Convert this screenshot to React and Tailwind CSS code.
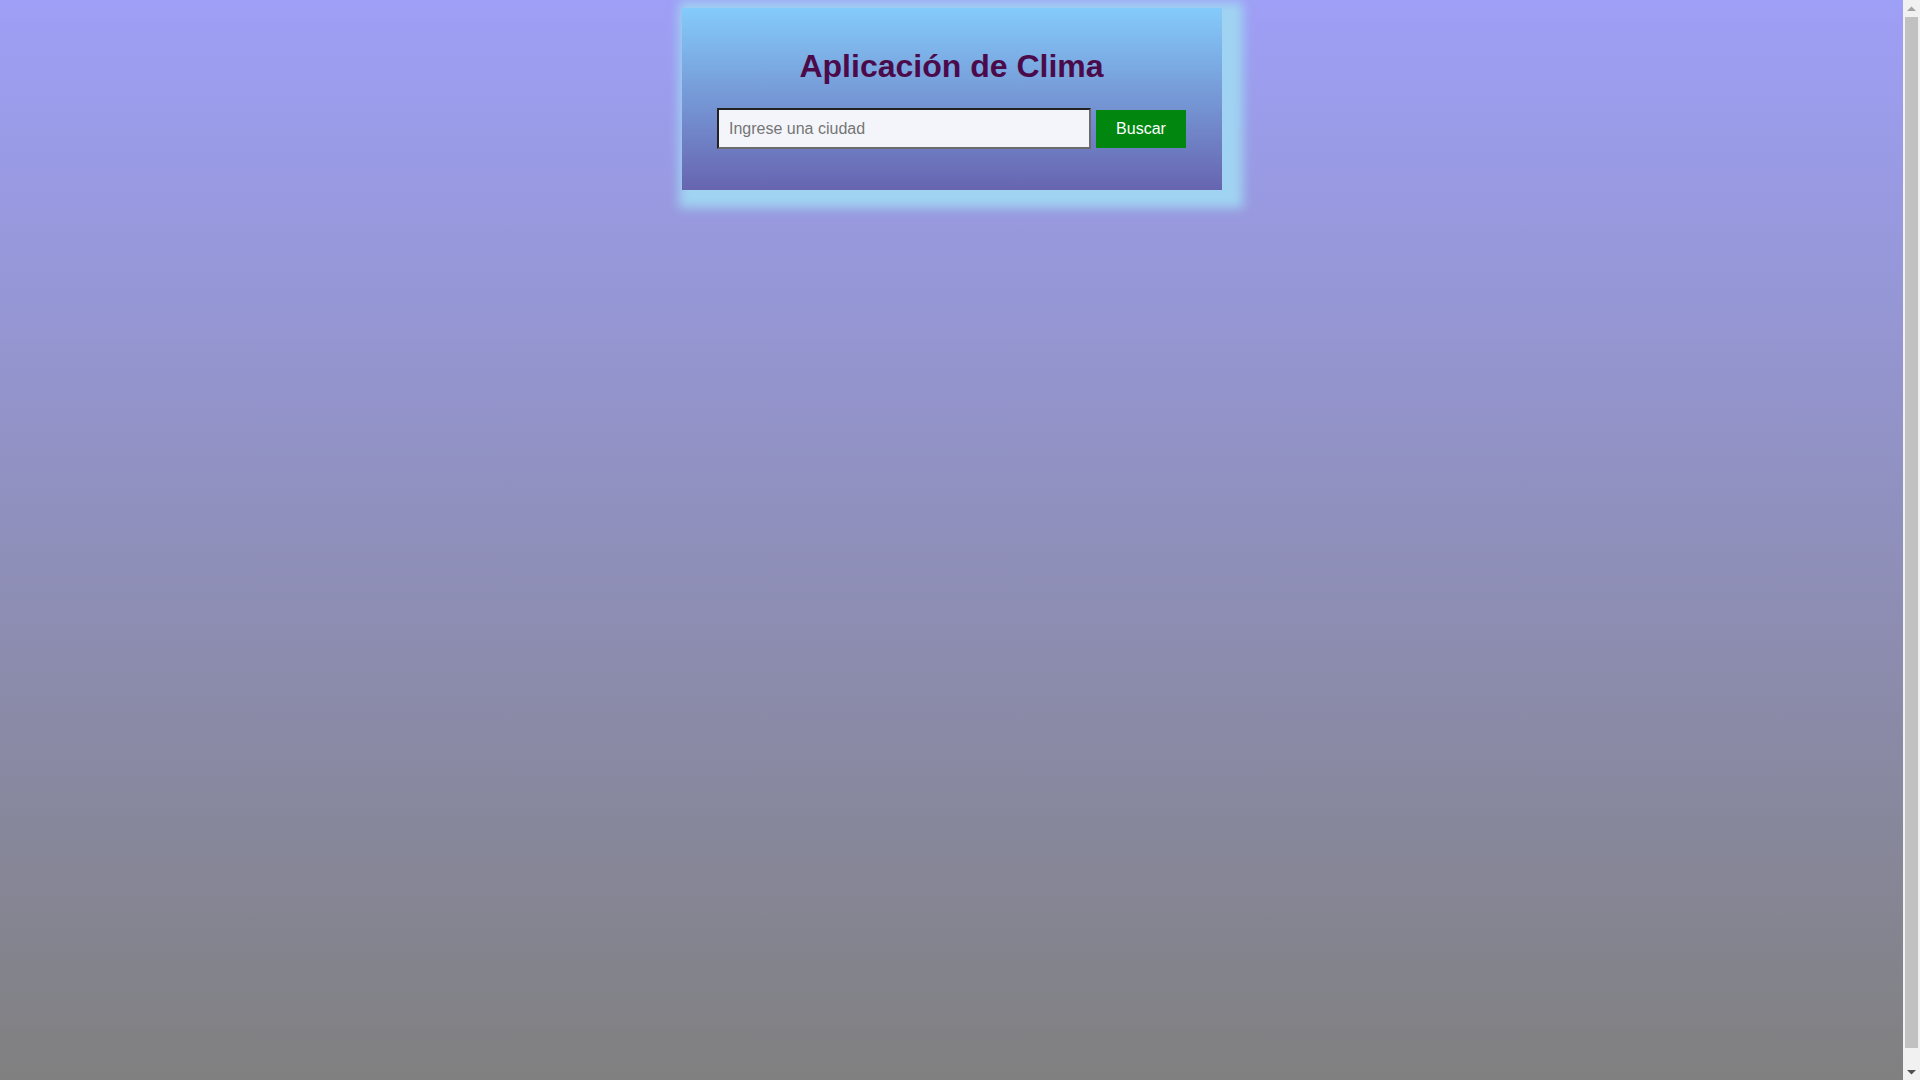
export default function App() {
    return (
        <div className="flex h-screen w-full overflow-hidden font-['Liberation_Sans',Arial,sans-serif]">
            {/* Page */}
            <main className="h-full flex-1 bg-[linear-gradient(#9e9ff6,#808080_1080px)] pt-2">
                {/* Weather card */}
                <div className="mx-auto w-[540px] bg-[linear-gradient(#84cbfa,#6764b0)] pt-[40px] pb-[41px] shadow-[9px_6px_10px_12px_#a0d3f2]">
                    <h1 className="text-center text-[32px] leading-[37px] font-bold text-[#4b0b4b]">
                        Aplicación de Clima
                    </h1>

                    <form className="mt-[23px] flex items-center justify-center gap-[5px]" onSubmit={(e) => e.preventDefault()}>
                        <input
                            type="text"
                            placeholder="Ingrese una ciudad"
                            className="h-[41px] w-[374px] border-2 border-t-[#222] border-l-[#222] border-b-[#6b6b6b] border-r-[#6b6b6b] bg-[#f3f5fa] px-[10px] text-[16px] text-black placeholder:text-[#757575] outline-none"
                        />
                        <button
                            type="submit"
                            className="h-[38px] w-[90px] bg-[#01870f] text-[16px] text-white"
                        >
                            Buscar
                        </button>
                    </form>
                </div>
            </main>

            {/* Scrollbar */}
            <div className="flex h-full w-[17px] flex-col items-center bg-[#f1f1f1]">
                <div className="flex h-[17px] w-full items-center justify-center">
                    <svg width="9" height="6" viewBox="0 0 9 6"><path d="M0 5 L4.5 0.5 L9 5 Z" fill="#a3a3a3" /></svg>
                </div>
                <div className="mx-auto w-[13px] flex-1 bg-[#c1c1c1] mb-[15px]" />
                <div className="flex h-[17px] w-full items-center justify-center">
                    <svg width="9" height="6" viewBox="0 0 9 6"><path d="M0 1 L4.5 5.5 L9 1 Z" fill="#505050" /></svg>
                </div>
            </div>
        </div>
    );
}
